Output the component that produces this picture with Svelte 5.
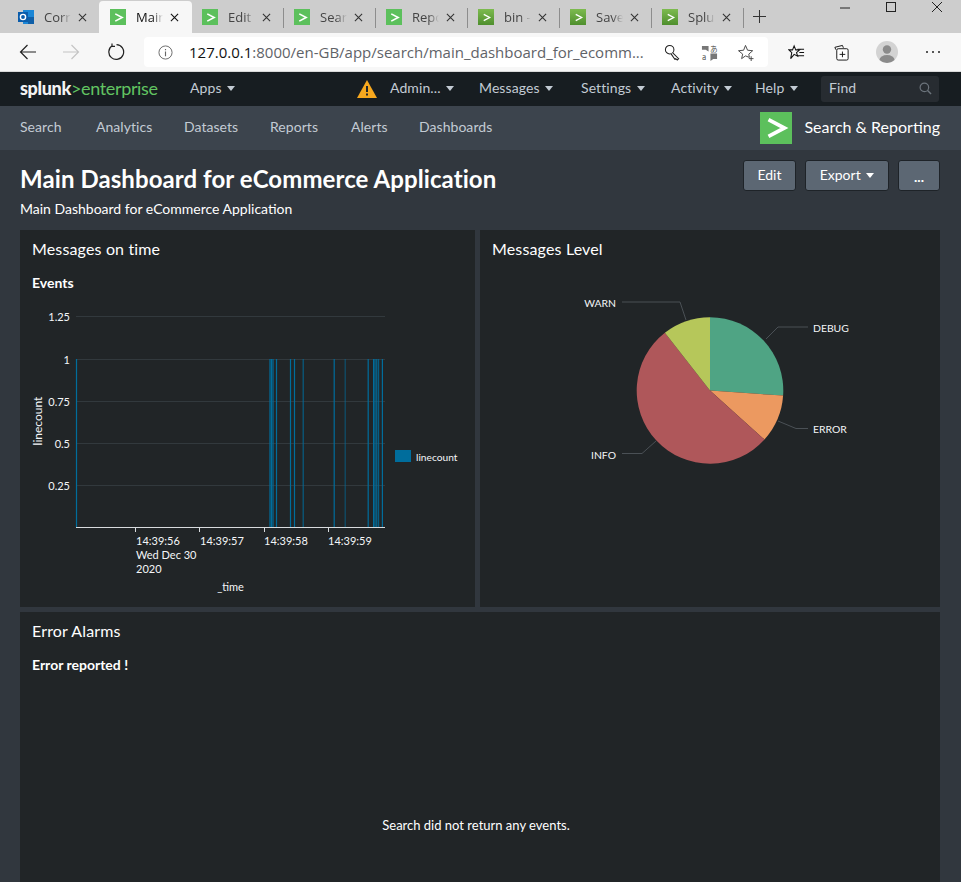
<script>
  // Browser chrome plus a Splunk dashboard: two chart panels and one empty panel.
  const tabs = [
    { title: "Correlation", icon: "outlook" },
    { title: "Main Dashboard", icon: "splunk", active: true },
    { title: "Edit Splunk", icon: "splunk" },
    { title: "Search", icon: "splunk" },
    { title: "Reports", icon: "splunk" },
    { title: "bin - Splunk", icon: "old" },
    { title: "Save", icon: "old" },
    { title: "Splunk", icon: "old" }
  ];

  const ygrid = [
    { y: 316.5, label: "1.25" },
    { y: 359.5, label: "1" },
    { y: 401.5, label: "0.75" },
    { y: 443.5, label: "0.5" },
    { y: 485.5, label: "0.25" }
  ];
  const xticks = [135.5, 199.5, 264.5, 328.5];
  const bars = [
    { x: 270, o: 1 }, { x: 271.5, o: 1 }, { x: 273, o: 1 }, { x: 276.5, o: 1 },
    { x: 290.5, o: 1 }, { x: 294.5, o: 1 }, { x: 303.2, o: 0.8 }, { x: 334.2, o: 1 },
    { x: 345.2, o: 0.6 }, { x: 368.2, o: 1 }, { x: 373.6, o: 1 }, { x: 375, o: 1 },
    { x: 376.8, o: 1 }, { x: 378.6, o: 0.8 }, { x: 382.4, o: 1 }
  ];

  const cx = 710, cy = 390.5, r = 73.3;
  const slices = [
    { from: 0, to: 94, color: "#4fa484" },
    { from: 94, to: 132, color: "#ec9960" },
    { from: 132, to: 322, color: "#af575a" },
    { from: 322, to: 360, color: "#b6c75a" }
  ];
  const pt = (deg) => {
    const a = (deg * Math.PI) / 180;
    return `${(cx + r * Math.sin(a)).toFixed(2)} ${(cy - r * Math.cos(a)).toFixed(2)}`;
  };
  const wedge = (s) =>
    `M${cx} ${cy}L${pt(s.from)}A${r} ${r} 0 ${s.to - s.from > 180 ? 1 : 0} 1 ${pt(s.to)}Z`;
</script>

{#snippet chevron(size, stroke)}
  <svg width={size} height={size} viewBox="0 0 16 16"><path d="M4 3.5 12.5 8 4 12.5" fill="none" stroke={stroke} stroke-width="2" /></svg>
{/snippet}

<div class="page">
  <div class="tabstrip">
    {#each tabs as t, i}
      <div class="tab" class:active={t.active} class:sep={i > 1}>
        {#if t.icon === "outlook"}
          <svg class="ticon" viewBox="0 0 16 16">
            <rect x="5" y="1" width="11" height="14" fill="#1a86d6" />
            <rect x="10" y="8" width="6" height="7" fill="#0f5fa8" />
            <rect x="0" y="3" width="10" height="10" fill="#0a5cab" />
            <circle cx="5" cy="8" r="2.6" fill="none" stroke="#fff" stroke-width="1.4" />
          </svg>
        {:else}
          <span class="ticon sq" class:old={t.icon === "old"}>{@render chevron(t.icon === "old" ? 11 : 13, "#fff")}</span>
        {/if}
        <span class="ttitle">{t.title}</span>
        <svg class="tclose" viewBox="0 0 10 10"><path d="M1 1 9 9M9 1 1 9" stroke={t.active ? "#111" : "#333"} stroke-width="1.2" /></svg>
      </div>
    {/each}
    <svg class="plus" viewBox="0 0 14 14"><path d="M7 0V14M0 7H14" stroke="#333" stroke-width="1.1" /></svg>
    <div class="winctl">
      <svg viewBox="0 0 12 12"><path d="M1 7H11" stroke="#222" /></svg>
      <svg viewBox="0 0 12 12"><rect x="1.5" y="1.5" width="9" height="9" fill="none" stroke="#222" /></svg>
      <svg viewBox="0 0 12 12"><path d="M1 1 11 11M11 1 1 11" stroke="#222" /></svg>
    </div>
  </div>

  <div class="toolbar">
    <svg class="navbtn first" viewBox="0 0 18 18"><path d="M17 9H1.5M8.5 2 1.5 9l7 7" fill="none" stroke="#222" stroke-width="1.2" /></svg>
    <svg class="navbtn" viewBox="0 0 18 18"><path d="M1 9H16.5M9.5 2l7 7-7 7" fill="none" stroke="#c4c4c4" stroke-width="1.2" /></svg>
    <svg class="navbtn" viewBox="0 0 18 18"><path d="M5.5 2.6A7.4 7.4 0 1 0 9.5 1.6M5 .5V3.4H8" fill="none" stroke="#222" stroke-width="1.2" /></svg>
    <div class="address">
      <svg class="info" viewBox="0 0 16 16"><circle cx="8" cy="8" r="7" fill="none" stroke="#666" /><path d="M8 7V12M8 4.2V5.6" stroke="#666" stroke-width="1.2" /></svg>
      <span class="url"><b>127.0.0.1</b>:8000/en-GB/app/search/main_dashboard_for_ecomm...</span>
      <svg class="aicon key" viewBox="0 0 18 18"><circle cx="6" cy="6" r="4.5" fill="#fff" stroke="#222" stroke-width="1.1" /><path d="M9 9.2 15.5 15.5 14 17 12.5 15.5 11.5 16.2 7.5 10.5" fill="#fff" stroke="#222" stroke-width="1.1" /></svg>
      <svg class="aicon tr" viewBox="0 0 18 18"><path d="M1 2H8V8L5 6H1ZM10 10H17V16H13L10 18Z" fill="#777" /><text x="9.5" y="8" class="trtext">あ</text><text x="1" y="17" class="trtext">a</text></svg>
      <svg class="aicon star" viewBox="0 0 18 18"><path d="M9 1.5 11.2 6.6 16.6 7.1 12.5 10.7 13.1 14.2 9 12.6 4.9 15.5 6 10.7 1.6 7.1 7 6.6Z" fill="none" stroke="#444" /><path d="M12.5 15.5H17.5M15 13V18" stroke="#444" /></svg>
    </div>
    <svg class="ricon fav" viewBox="0 0 18 18"><path d="M6.5 2 8.2 6.2H12.4L9 9.2 10.3 13 6.5 11 2.8 15.5 4 9.2 1 6.2H4.8Z" fill="none" stroke="#111" stroke-width="1.1" /><path d="M10 5.5H17M12 9H17M10 12.5H17" stroke="#111" stroke-width="1.1" /></svg>
    <svg class="ricon coll" viewBox="0 0 18 18"><path d="M3 6 2 3.5 10 1.5 11 4" fill="none" stroke="#111" /><rect x="4" y="5" width="12" height="12" rx="1.5" fill="#fff" stroke="#111" /><path d="M10 8V14M7 11H13" stroke="#111" /></svg>
    <svg class="avatar" viewBox="0 0 22 22"><circle cx="11" cy="11" r="11" fill="#d3d3d3" /><circle cx="11" cy="8.5" r="4.2" fill="#8b8b8b" /><path d="M3.5 19a7.5 5 0 0 1 15 0 11 11 0 0 1-15 0Z" fill="#8b8b8b" /></svg>
    <span class="more">
      <i></i><i></i><i></i>
    </span>
  </div>

  <header class="splunkbar">
    <div class="logo"><b>splunk</b><span class="gt">&gt;</span><span class="ent">enterprise</span></div>
    <span class="navitem apps">Apps <i class="caret"></i></span>
    <svg class="warn" viewBox="0 0 20 18"><path d="M10 0 20 18H0Z" fill="#f7a81e" /><path d="M10 6V12M10 13.4V15.4" stroke="#20262b" stroke-width="2" /></svg>
    <div class="usernav">
      <span class="navitem">Admin... <i class="caret"></i></span>
      <span class="navitem">Messages <i class="caret"></i></span>
      <span class="navitem">Settings <i class="caret"></i></span>
      <span class="navitem">Activity <i class="caret"></i></span>
      <span class="navitem">Help <i class="caret"></i></span>
    </div>
    <div class="find">
      <span class="navitem">Find</span>
      <svg viewBox="0 0 14 14"><circle cx="5.8" cy="5.8" r="4.6" fill="none" stroke="#6c747c" stroke-width="1.3" /><path d="M9.2 9.2 13 13" stroke="#6c747c" stroke-width="1.5" /></svg>
    </div>
  </header>

  <nav class="appbar">
    <div class="applinks">
      <span>Search</span><span>Analytics</span><span>Datasets</span><span>Reports</span><span>Alerts</span><span>Dashboards</span>
    </div>
    <div class="appname">
      <span class="applogo">{@render chevron(30, "#fff")}</span>
      <span class="appname-text">Search &amp; Reporting</span>
    </div>
  </nav>

  <main class="dash">
    <div class="dashhead">
      <div>
        <h1>Main Dashboard for eCommerce Application</h1>
        <p>Main Dashboard for eCommerce Application</p>
      </div>
      <div class="actions">
        <button class="b-edit">Edit</button>
        <button class="b-export">Export <i class="caret light"></i></button>
        <button class="b-more">...</button>
      </div>
    </div>

    <div class="row">
      <section class="panel left">
        <h2>Messages on time</h2>
        <h3>Events</h3>
      </section>
      <section class="panel right">
        <h2>Messages Level</h2>
      </section>
      <!-- Charts share page coordinates, drawn over both panels -->
      <svg class="charts" viewBox="0 230 961 377">
        {#each ygrid as g}
          <line x1="76" x2="385" y1={g.y} y2={g.y} class="grid" />
          <text x="70" y={g.y + 4} text-anchor="end" class="tick">{g.label}</text>
        {/each}
        <line x1="76.5" x2="76.5" y1="359" y2="527" class="bar" />
        {#each bars as b}
          <line x1={b.x} x2={b.x} y1="359" y2="527" class="bar" opacity={b.o} />
        {/each}
        <line x1="76" x2="385" y1="527.5" y2="527.5" class="axis" />
        {#each xticks as x}
          <line x1={x} x2={x} y1="527" y2="532" class="axis" />
        {/each}
        <text x="136" y="545" class="tick">14:39:56</text>
        <text x="136" y="559" class="tick">Wed Dec 30</text>
        <text x="136" y="573" class="tick">2020</text>
        <text x="200" y="545" class="tick">14:39:57</text>
        <text x="264" y="545" class="tick">14:39:58</text>
        <text x="328" y="545" class="tick">14:39:59</text>
        <text x="230.5" y="591" text-anchor="middle" class="tick">_time</text>
        <text transform="translate(42 421) rotate(-90)" text-anchor="middle" class="tick axis-title">linecount</text>
        <rect x="395" y="450" width="16" height="12" fill="#006d9c" />
        <text x="416" y="461" class="tick legend">linecount</text>

        {#each slices as s}
          <path d={wedge(s)} fill={s.color} />
        {/each}
        <path d="M622 302H680L686 320M766 339 778 327H808M778 421 796 428.5H808M656 441 642 453.5H622" class="leader" />
        <text x="616" y="307" text-anchor="end" class="tick pielabel">WARN</text>
        <text x="813" y="332" class="tick pielabel">DEBUG</text>
        <text x="813" y="433" class="tick pielabel">ERROR</text>
        <text x="616" y="459" text-anchor="end" class="tick pielabel">INFO</text>
      </svg>
    </div>

    <section class="panel bottom">
      <h2>Error Alarms</h2>
      <h3>Error reported !</h3>
      <p class="empty">Search did not return any events.</p>
    </section>
  </main>
</div>

<style>
  :global(body) {
    margin: 0;
    background: #31373e;
  }
  .page {
    width: 961px;
    height: 882px;
    overflow: hidden;
    font-family: Lato, "Open Sans", sans-serif;
    color: #fff;
  }
  .tabstrip {
    height: 33px;
    background: #cdcdcd;
    display: flex;
    align-items: flex-end;
    padding-left: 8px;
    position: relative;
  }
  .tab {
    width: 92px;
    height: 32px;
    display: flex;
    align-items: center;
    padding-left: 10px;
    box-sizing: border-box;
    position: relative;
    font: 13px "Open Sans", sans-serif;
    color: #444;
  }
  .tab.active {
    width: 93px;
    margin-left: -1px;
    padding-left: 11px;
    background: #f7f7f7;
    border-radius: 4px 4px 0 0;
    color: #111;
  }
  .tab.sep::after {
    content: "";
    position: absolute;
    right: 0;
    top: 7px;
    height: 20px;
    width: 1px;
    background: #8d8d8d;
  }
  .ticon {
    width: 16px;
    height: 16px;
    flex: none;
  }
  .sq {
    background: #5cc05c;
    display: flex;
    align-items: center;
    justify-content: center;
  }
  .sq.old {
    background: linear-gradient(#7dbb4f, #4f8f2e);
  }
  .ttitle {
    margin-left: 10px;
    width: 27px;
    overflow: hidden;
    white-space: nowrap;
    -webkit-mask-image: linear-gradient(90deg, #000 60%, transparent);
    mask-image: linear-gradient(90deg, #000 60%, transparent);
  }
  .tclose {
    width: 9px;
    height: 9px;
    margin-left: 7px;
  }
  .plus {
    width: 13px;
    height: 13px;
    margin: 0 0 10px 9px;
  }
  .winctl {
    position: absolute;
    right: 18px;
    top: 1px;
    display: flex;
    gap: 34px;
  }
  .winctl svg {
    width: 12px;
    height: 12px;
  }

  .toolbar {
    height: 38px;
    background: #f7f7f7;
    border-bottom: 1px solid #d9d9d9;
    display: flex;
    align-items: center;
    padding-left: 19px;
  }
  .navbtn {
    width: 18px;
    height: 18px;
    margin-right: 26px;
  }
  .navbtn.first {
    margin-right: 25px;
  }
  .navbtn:nth-child(3) {
    margin-left: 1px;
    margin-right: 0;
  }
  .address {
    width: 624px;
    height: 30px;
    margin-left: 19px;
    background: #fff;
    border-radius: 4px;
    display: flex;
    align-items: center;
    padding-left: 14px;
    box-sizing: border-box;
  }
  .info {
    width: 15px;
    height: 15px;
  }
  .url {
    margin-left: 16px;
    width: 465px;
    font: 15px "Open Sans", sans-serif;
    color: #5f6368;
    white-space: nowrap;
    overflow: hidden;
  }
  .url b {
    font-weight: 400;
    color: #111;
  }
  .aicon {
    width: 17px;
    height: 17px;
    flex: none;
  }
  .key {
    margin-left: 10px;
  }
  .tr {
    margin-left: 20px;
  }
  .star {
    margin-left: 19px;
  }
  .trtext {
    font: 8px "Noto Sans CJK JP", sans-serif;
    fill: #555;
  }
  .ricon {
    width: 17px;
    height: 17px;
  }
  .fav {
    margin-left: 20px;
  }
  .coll {
    margin-left: 28px;
  }
  .avatar {
    width: 22px;
    height: 22px;
    margin-left: 26px;
  }
  .more {
    display: flex;
    gap: 4px;
    margin-left: 28px;
  }
  .more i {
    width: 2px;
    height: 2px;
    background: #222;
    border-radius: 50%;
  }

  .splunkbar {
    height: 34px;
    background: #171d21;
    display: flex;
    align-items: center;
    padding-left: 20px;
    font-size: 14px;
  }
  .logo {
    width: 170px;
    font-size: 18px;
    letter-spacing: -0.35px;
    white-space: nowrap;
    padding-bottom: 3px;
  }
  .logo b {
    font-weight: 900;
    color: #f3f3f3;
  }
  .gt,
  .ent {
    color: #62c462;
  }
  .navitem {
    color: #c3cbd4;
    white-space: nowrap;
    padding-bottom: 3px;
    letter-spacing: 0.1px;
  }
  .caret {
    display: inline-block;
    width: 0;
    height: 0;
    margin-left: 2px;
    border: 4px solid transparent;
    border-top: 5px solid #c3cbd4;
    border-bottom: 0;
    vertical-align: 2px;
  }
  .caret.light {
    border-top-color: #fff;
  }
  .apps {
    width: 167px;
  }
  .warn {
    width: 20px;
    height: 18px;
    margin-right: 13px;
  }
  .usernav {
    display: grid;
    grid-template-columns: 89px 102px 90px 84px 66px;
  }
  .find {
    width: 118px;
    height: 26px;
    box-sizing: border-box;
    background: #272c31;
    border-radius: 3px;
    display: flex;
    align-items: center;
    justify-content: space-between;
    padding: 0 7px 0 8px;
  }
  .find svg {
    width: 13px;
    height: 13px;
    margin-bottom: 2px;
  }

  .appbar {
    height: 44px;
    background: #3c444d;
    display: flex;
    align-items: center;
    justify-content: space-between;
    padding: 0 21px 0 20px;
  }
  .applinks {
    display: grid;
    grid-template-columns: 76px 88px 86px 81px 68px auto;
    font-size: 14px;
    color: #c3cbd4;
    padding-bottom: 3px;
    letter-spacing: 0.05px;
  }
  .appname {
    display: flex;
    align-items: center;
    gap: 12px;
    font-size: 16px;
    color: #fff;
  }
  .appname-text {
    padding-bottom: 3px;
  }
  .applogo {
    width: 32px;
    height: 32px;
    background: #5cc05c;
    display: flex;
    align-items: center;
    justify-content: center;
  }

  .dash {
    padding: 0 21px 0 20px;
  }
  .dashhead {
    height: 80px;
    display: flex;
    justify-content: space-between;
  }
  h1 {
    margin: 14px 0 0;
    font-size: 24px;
    line-height: 29px;
    font-weight: 700;
    letter-spacing: 0.08px;
  }
  .dashhead p {
    margin: 7px 0 0;
    font-size: 14px;
    line-height: 17px;
  }
  .actions {
    display: flex;
    gap: 9px;
    margin-top: 10px;
    align-items: flex-start;
  }
  button {
    height: 31px;
    padding: 0 0 2px;
    background: #5c6773;
    border: 1px solid #1e2328;
    border-radius: 3px;
    color: #fff;
    font: 14px Lato, sans-serif;
  }
  .b-edit {
    width: 53px;
  }
  .b-export {
    width: 84px;
  }
  .b-more {
    width: 42px;
    padding: 2px 0 0;
    font-weight: 700;
  }

  .row {
    display: grid;
    grid-template-columns: 455px 460px;
    gap: 5px;
    height: 377px;
    position: relative;
    margin-bottom: 5px;
  }
  .charts {
    position: absolute;
    left: -20px;
    top: 0;
    width: 961px;
    height: 377px;
  }
  .panel {
    background: #212527;
    padding: 9px 12px;
    box-sizing: border-box;
  }
  h2 {
    margin: 0;
    font-size: 16px;
    line-height: 20px;
    font-weight: 400;
    letter-spacing: 0.15px;
  }
  h3 {
    margin: 15px 0 0;
    font-size: 14px;
    line-height: 17px;
    font-weight: 700;
  }
  .bottom {
    height: 300px;
  }
  .empty {
    margin: 144px 0 0;
    padding-right: 8px;
    text-align: center;
    font-size: 13px;
    line-height: 16px;
  }
  .tick {
    font: 11px Lato, sans-serif;
    fill: #f4f6f8;
  }
  .pielabel {
    font-size: 10.4px;
  }
  .axis-title {
    font-size: 12px;
  }
  .legend {
    font-size: 10.2px;
  }
  .grid {
    stroke: #32393d;
    stroke-width: 1;
  }
  .axis {
    stroke: #d8dbde;
    stroke-width: 1;
  }
  .bar {
    stroke: #006d9c;
    stroke-width: 1.2;
  }
  .leader {
    fill: none;
    stroke: #4a5055;
    stroke-width: 1;
  }
</style>
